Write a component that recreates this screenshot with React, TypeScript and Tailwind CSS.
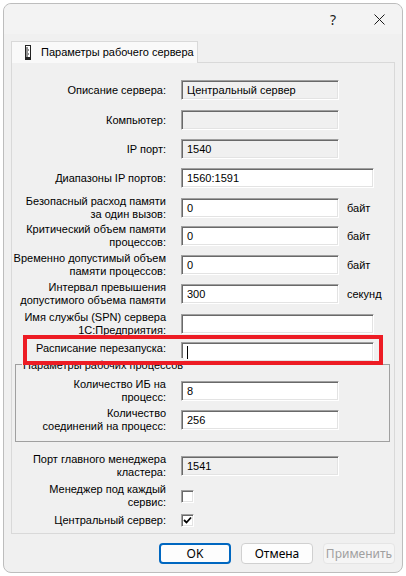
import React from "react";

const font = { fontFamily: '"Liberation Sans", Arial, sans-serif' };

function Field({ value = "", disabled = false, wide = false, caret = false }: { value?: string; disabled?: boolean; wide?: boolean; caret?: boolean }) {
  return (
    <div
      className={`flex h-[20px] items-center whitespace-nowrap border border-t-[#a0a0a0] border-l-[#a0a0a0] border-b-white border-r-white pl-[5px] text-[11px] text-black shadow-[inset_1px_1px_0_#696969,inset_-1px_-1px_0_#e3e3e3] ${wide ? "w-[193px]" : "w-[158px]"} ${disabled ? "bg-[#f0f0f0]" : "bg-white"}`}
    >
      {caret ? <span className="h-[13px] w-px bg-black" /> : value}
    </div>
  );
}

function Check({ checked = false }: { checked?: boolean }) {
  return (
    <div className="flex h-[13px] w-[13px] items-center justify-center border border-t-[#a0a0a0] border-l-[#a0a0a0] border-b-white border-r-white bg-white shadow-[inset_1px_1px_0_#696969,inset_-1px_-1px_0_#e3e3e3]">
      {checked && (
        <svg width="9" height="9" viewBox="0 0 9 9">
          <path d="M1 4 L3.5 6.5 L8 1.5" stroke="#000" strokeWidth="1.8" fill="none" />
        </svg>
      )}
    </div>
  );
}

function Row({ label, children, mt, labelW = 154, unit, labelClass = "" }: { label: React.ReactNode; children: React.ReactNode; mt: string; labelW?: number; unit?: string; labelClass?: string }) {
  return (
    <div className={`flex items-center ${mt}`}>
      <div className={`shrink-0 whitespace-nowrap text-right text-[11px] leading-[13px] text-black ${labelClass}`} style={{ width: labelW }}>
        {label}
      </div>
      <div className="ml-[15px]">{children}</div>
      {unit && <span className="ml-[8px] text-[11px] text-black">{unit}</span>}
    </div>
  );
}

export default function App() {
  return (
    <div className="h-[576px] w-[406px] bg-white p-[3px]" style={font}>
      <div className="relative flex h-[570px] w-[400px] flex-col rounded-[8px] border border-[#bdbdbd] bg-[#f0f0f0]">
        {/* title bar */}
        <div className="flex h-[30px] items-center justify-end rounded-t-[8px] bg-[#f3f3f3] pr-[17px]">
          <span className="mr-[38px] text-[14px] text-[#1a1a1a]" style={{ fontFamily: '"Noto Sans", sans-serif' }}>?</span>
          <svg width="11" height="11" viewBox="0 0 11 11">
            <path d="M0.5 0.5 L10.5 10.5 M10.5 0.5 L0.5 10.5" stroke="#1a1a1a" strokeWidth="1" />
          </svg>
        </div>

        {/* tab */}
        <div className="ml-[7px] mt-[7px] flex">
          <div className="relative z-10 -mb-px flex h-[22px] w-[187px] items-center whitespace-nowrap border border-b-0 border-[#d9d9d9] bg-[#f9f9f9] pl-[12px]">
            <svg width="8" height="15" viewBox="0 0 8 15" className="mr-[9px] shrink-0">
              <rect x="1.5" y="0.5" width="5" height="14" fill="#fff" stroke="#222" />
              <path d="M2 3 h2 M2 5 h3 M2 7 h2 M2 9 h3 M2 11 h2" stroke="#222" />
              <rect x="2" y="12" width="4" height="2" fill="#222" />
            </svg>
            <span className="text-[11px] text-black">Параметры рабочего сервера</span>
          </div>
        </div>

        {/* panel */}
        <div className="mx-[7px] flex h-[472px] flex-col border border-[#d9d9d9] bg-[#f0f0f0]">
          <Row label="Описание сервера:" mt="mt-[17px]">
            <Field value="Центральный сервер" disabled />
          </Row>
          <Row label="Компьютер:" mt="mt-[10px]">
            <Field disabled />
          </Row>
          <Row label="IP порт:" mt="mt-[9px]">
            <Field value="1540" disabled />
          </Row>
          <Row label="Диапазоны IP портов:" mt="mt-[9px]">
            <Field value="1560:1591" wide />
          </Row>
          <Row label={<>Безопасный расход памяти<br />за один вызов:</>} mt="mt-[7px]" unit="байт">
            <Field value="0" />
          </Row>
          <Row label={<>Критический объем памяти<br />процессов:</>} mt="mt-[2px]" unit="байт">
            <Field value="0" />
          </Row>
          <Row label={<>Временно допустимый объем<br />памяти процессов:</>} mt="mt-[3px]" unit="байт">
            <Field value="0" />
          </Row>
          <Row label={<>Интервал превышения<br />допустимого объема памяти</>} mt="mt-[3px]" unit="секунд">
            <Field value="300" />
          </Row>
          <Row label={<>Имя службы (SPN) сервера<br />1С:Предприятия:</>} mt="mt-[4px]">
            <Field wide />
          </Row>
          <Row label="Расписание перезапуска:" mt="mt-[5px]" labelClass="-translate-y-[4px]">
            <Field wide caret />
          </Row>

          {/* group */}
          <div className="relative ml-[3px] mr-[4px] mt-[2px] border border-[#a0a0a0] pb-[8px]">
            <span className="absolute left-[6px] top-[-7px] whitespace-nowrap bg-[#f0f0f0] px-px text-[11px] leading-[14px] text-black">
              Параметры рабочих процессов
            </span>
            <Row label={<>Количество ИБ на<br />процесс:</>} mt="mt-[13px]" labelW={150}>
              <Field value="8" />
            </Row>
            <Row label={<>Количество<br />соединений на процесс:</>} mt="mt-[3px]" labelW={150}>
              <Field value="256" />
            </Row>
          </div>

          <Row label={<>Порт главного менеджера<br />кластера:</>} mt="mt-[11px]">
            <Field value="1541" disabled />
          </Row>
          <Row label={<>Менеджер под каждый<br />сервис:</>} mt="mt-[4px]">
            <Check />
          </Row>
          <Row label="Центральный сервер:" mt="mt-[5px]">
            <Check checked />
          </Row>
        </div>

        {/* buttons */}
        <div className="mr-[7px] mt-[9px] flex justify-end gap-[10px]" style={{ fontFamily: '"Noto Sans", sans-serif' }}>
          <button className="h-[21px] w-[72px] rounded-[4px] border-2 border-[#0067c0] bg-[#fdfdfd] text-[12px] leading-none text-black">OK</button>
          <button className="h-[21px] w-[72px] rounded-[4px] border border-[#d0d0d0] bg-[#fdfdfd] text-[12px] leading-none text-black">Отмена</button>
          <button className="h-[21px] w-[72px] rounded-[4px] border border-[#e5e5e5] bg-[#f5f5f5] text-[12px] leading-none text-[#a0a0a0]">Применить</button>
        </div>

        {/* red highlight */}
        <div className="pointer-events-none absolute left-[19px] top-[331px] z-20 h-[30px] w-[360px] border-[4px] border-[#ed1c24]" />
      </div>
    </div>
  );
}
